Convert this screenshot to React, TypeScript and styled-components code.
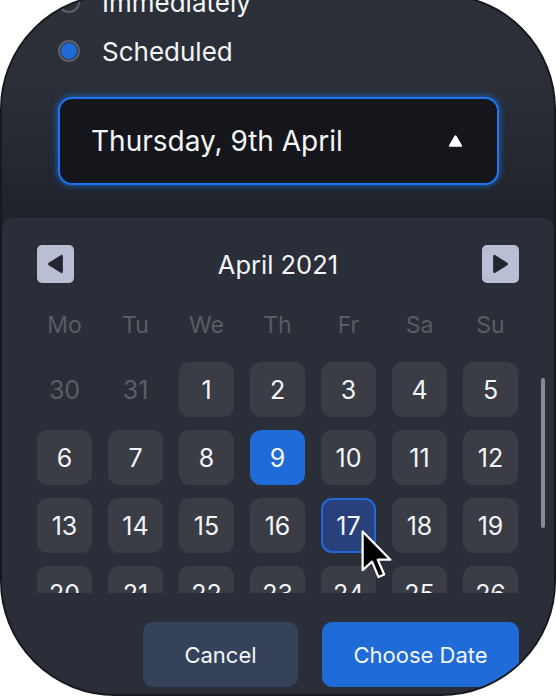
import { FC } from 'react';
import styled, { createGlobalStyle } from 'styled-components';

const GlobalStyle = createGlobalStyle`
  html, body {
    margin: 0;
    padding: 0;
    background: #ffffff;
  }
  body {
    width: 556px;
    height: 696px;
    overflow: hidden;
    font-family: Inter, "Noto Sans", sans-serif;
  }
`;

const Frame = styled.div`
  box-sizing: border-box;
  width: 556px;
  height: 702px;
  margin-top: -6px;
  border-radius: 115px;
  border: 2px solid #17191e;
  overflow: hidden;
  display: flex;
  flex-direction: column;
  background: #1f2228;
`;

const Top = styled.div`
  padding: 0 0 33px 56px;
  display: flex;
  flex-direction: column;
  background: linear-gradient(180deg, #2c3039 0%, #2a2e37 45%, #1f2228 100%);
`;

const Options = styled.div`
  margin-top: -11px;
  display: flex;
  flex-direction: column;
  gap: 15px;
`;

const OptionRow = styled.label`
  height: 34px;
  display: flex;
  align-items: center;
  gap: 22px;
  color: #f4f5f7;
  font-size: 26px;
`;

const Radio = styled.span<{ $checked?: boolean }>`
  box-sizing: border-box;
  width: 22px;
  height: 22px;
  border-radius: 50%;
  border: 2px solid #5d6067;
  background: ${(p) => (p.$checked ? '#1f6bd8' : 'transparent')};
  box-shadow: ${(p) => (p.$checked ? 'inset 0 0 0 1px #2a2e36' : 'none')};
`;

const Select = styled.div`
  box-sizing: border-box;
  margin-top: 29px;
  width: 441px;
  height: 88px;
  border: 2px solid #1c74ee;
  border-radius: 14px;
  background: #14161b;
  box-shadow: 0 0 6px 1px rgba(28, 116, 238, 0.7);
  display: flex;
  align-items: center;
  justify-content: space-between;
  padding: 0 33px 0 31px;
  color: #f4f5f7;
  font-size: 28px;
`;

const Panel = styled.div`
  position: relative;
  flex: 1;
  border-radius: 10px 10px 0 0;
  background: #2a2e38;
  padding: 27px 35px 0;
  display: flex;
  flex-direction: column;
`;

const Header = styled.div`
  height: 38px;
  display: flex;
  align-items: center;
  justify-content: space-between;
`;

const NavButton = styled.button`
  width: 37px;
  height: 38px;
  padding: 0;
  border: none;
  border-radius: 5px;
  background: #b8bed3;
  display: flex;
  align-items: center;
  justify-content: center;
`;

const Title = styled.div`
  color: #f4f5f7;
  font-size: 25.5px;
`;

const Weekdays = styled.div`
  margin-top: 27px;
  height: 30px;
  display: grid;
  grid-template-columns: repeat(7, 55px);
  column-gap: 16px;
  align-items: center;
`;

const Weekday = styled.div`
  text-align: center;
  color: #595c63;
  font-size: 23px;
`;

const Viewport = styled.div`
  margin-top: 22px;
  height: 231px;
  overflow: hidden;
`;

const Days = styled.div`
  display: grid;
  grid-template-columns: repeat(7, 55px);
  grid-auto-rows: 55px;
  column-gap: 16px;
  row-gap: 13px;
`;

type DayKind = 'muted' | 'normal' | 'selected' | 'focused';

const dayBg: Record<DayKind, string> = {
  muted: 'transparent',
  normal: '#3a3d46',
  selected: '#1f6bd8',
  focused: '#28417c',
};

const Day = styled.div<{ $kind: DayKind }>`
  position: relative;
  box-sizing: border-box;
  border-radius: 11px;
  display: flex;
  align-items: center;
  justify-content: center;
  font-size: 25px;
  background: ${(p) => dayBg[p.$kind]};
  color: ${(p) => (p.$kind === 'muted' ? '#5b5e65' : '#f4f5f7')};
  border: ${(p) => (p.$kind === 'focused' ? '2px solid #2468d8' : 'none')};
`;

const Cursor = styled.svg`
  position: absolute;
  left: 37px;
  top: 29px;
  width: 35px;
  height: 52px;
  z-index: 2;
`;

const Scrollbar = styled.div`
  position: absolute;
  right: 9px;
  top: 160px;
  width: 4px;
  height: 150px;
  border-radius: 2px;
  background: #878a91;
`;

const Footer = styled.div`
  margin-top: 29px;
  display: flex;
  justify-content: flex-end;
  gap: 24px;
`;

const ActionButton = styled.button<{ $primary?: boolean }>`
  height: 65px;
  width: ${(p) => (p.$primary ? '197px' : '155px')};
  border: none;
  border-radius: 10px;
  background: ${(p) => (p.$primary ? '#1f6bd8' : '#354259')};
  color: #f4f5f7;
  font-family: Inter, "Noto Sans", sans-serif;
  font-size: 22px;
`;

const weekdays = ['Mo', 'Tu', 'We', 'Th', 'Fr', 'Sa', 'Su'];

// only the rows that show inside the scroll viewport
const days: { n: number; kind: DayKind }[] = [
  { n: 30, kind: 'muted' },
  { n: 31, kind: 'muted' },
  ...Array.from({ length: 26 }, (_, i) => ({
    n: i + 1,
    kind: (i + 1 === 9 ? 'selected' : i + 1 === 17 ? 'focused' : 'normal') as DayKind,
  })),
];

const Triangle: FC<{ dir: 'left' | 'right' | 'up'; color: string; size: number }> = ({ dir, color, size }) => {
  const d =
    dir === 'left'
      ? 'M4 10 L15 3 L15 17 Z'
      : dir === 'right'
      ? 'M16 10 L5 3 L5 17 Z'
      : 'M10 4 L16.5 15 L3.5 15 Z';
  return (
    <svg width={size} height={size} viewBox="0 0 20 20">
      <path d={d} fill={color} stroke={color} strokeWidth={2.5} strokeLinejoin="round" />
    </svg>
  );
};

const App: FC = () => {
  return (
    <>
      <GlobalStyle />
      <Frame>
        <Top>
          <Options>
            <OptionRow>
              <Radio />
              Immediately
            </OptionRow>
            <OptionRow>
              <Radio $checked />
              Scheduled
            </OptionRow>
          </Options>
          <Select>
            Thursday, 9th April
            <Triangle dir="up" color="#ffffff" size={17} />
          </Select>
        </Top>
        <Panel>
          <Header>
            <NavButton>
              <Triangle dir="left" color="#23262e" size={22} />
            </NavButton>
            <Title>April 2021</Title>
            <NavButton>
              <Triangle dir="right" color="#23262e" size={22} />
            </NavButton>
          </Header>
          <Weekdays>
            {weekdays.map((w) => (
              <Weekday key={w}>{w}</Weekday>
            ))}
          </Weekdays>
          <Viewport>
            <Days>
              {days.map((d, i) => (
                <Day key={i} $kind={d.kind}>
                  {d.n}
                  {d.kind === 'focused' && (
                    <Cursor viewBox="0 0 14 21">
                      <path
                        d="M1 1 L1 16.6 L4.8 13.2 L7.4 19.4 L9.7 18.4 L7.1 12.4 L12.2 12.4 Z"
                        fill="#000000"
                        stroke="#ffffff"
                        strokeWidth={0.9}
                        strokeLinejoin="round"
                      />
                    </Cursor>
                  )}
                </Day>
              ))}
            </Days>
          </Viewport>
          <Footer>
            <ActionButton>Cancel</ActionButton>
            <ActionButton $primary>Choose Date</ActionButton>
          </Footer>
          <Scrollbar />
        </Panel>
      </Frame>
    </>
  );
};

export default App;
